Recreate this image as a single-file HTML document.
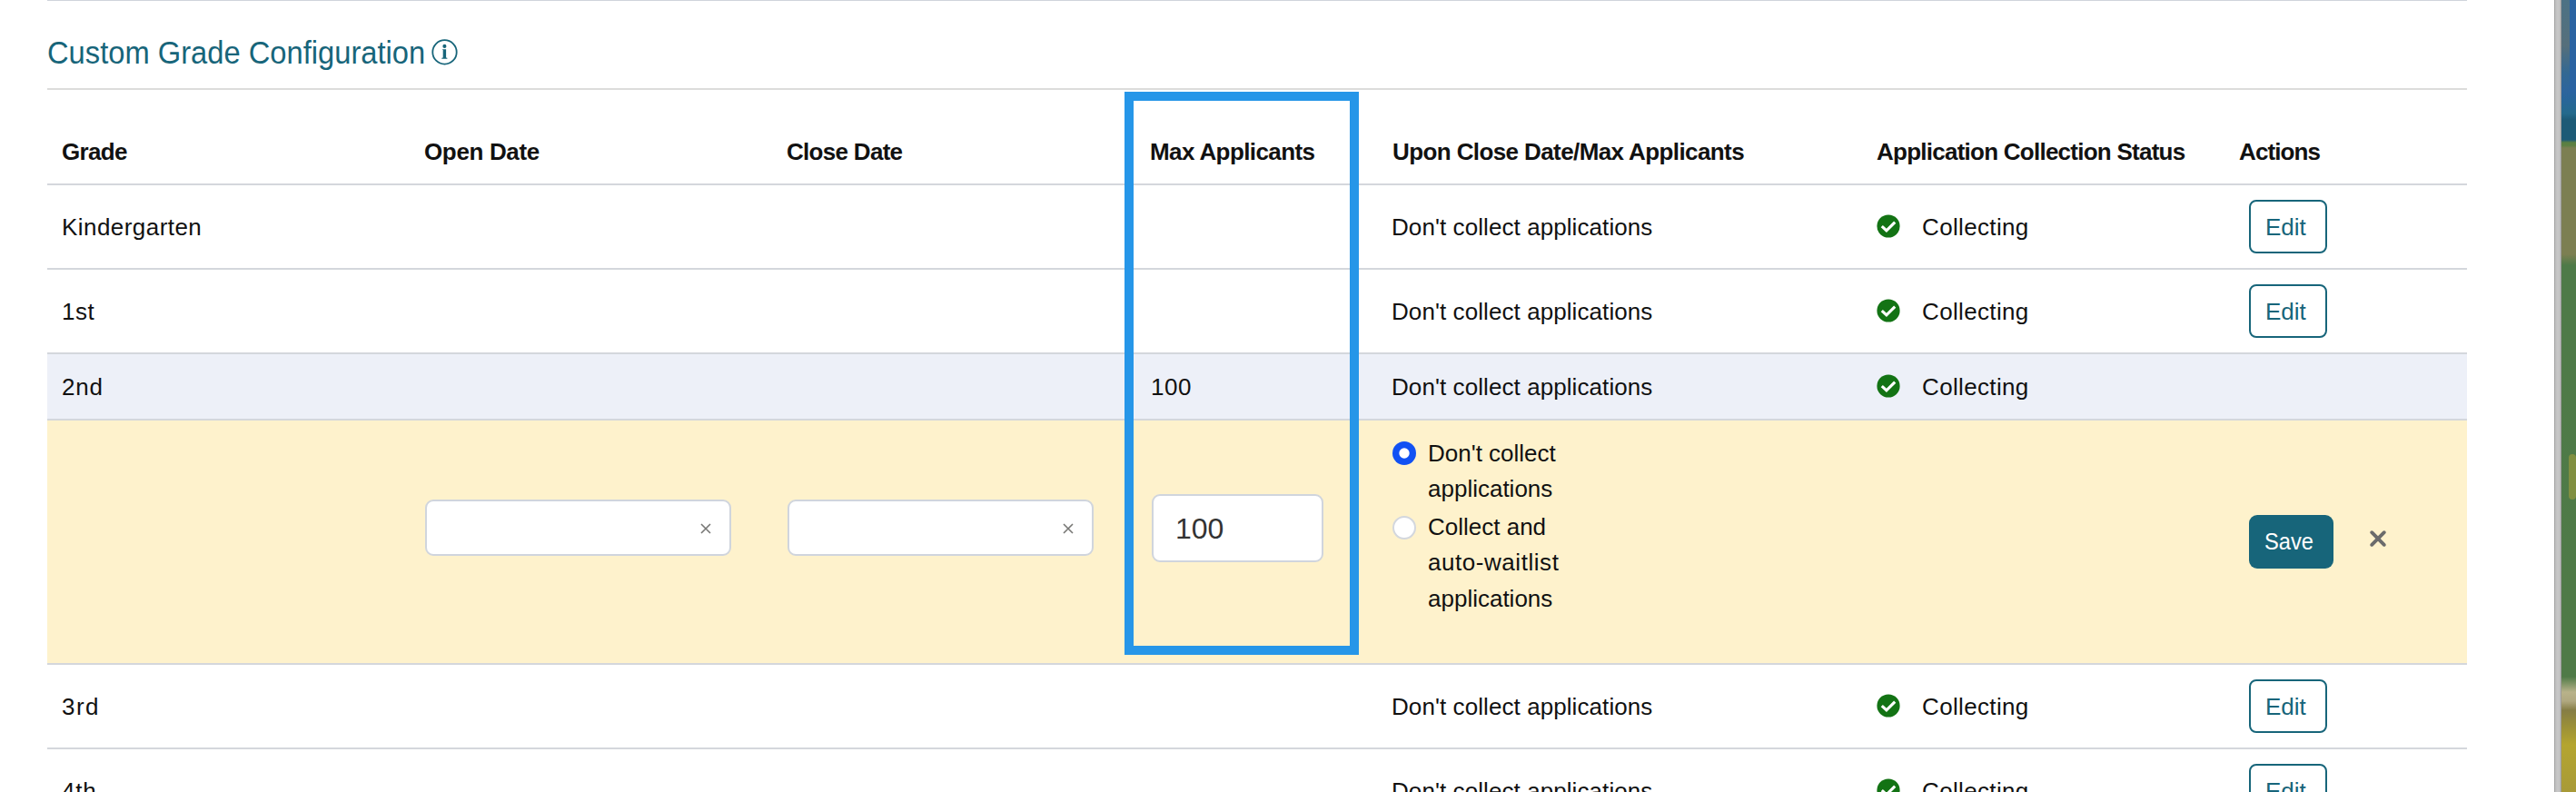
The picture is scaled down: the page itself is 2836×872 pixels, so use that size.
<!DOCTYPE html>
<html><head><meta charset="utf-8">
<style>
html,body{margin:0;padding:0;background:#fff;width:2836px;height:872px;overflow:hidden;position:relative;font-family:"Liberation Sans",sans-serif;color:#111;}
.a{position:absolute;white-space:nowrap;line-height:26px;font-size:26px;}
.h{position:absolute;white-space:nowrap;line-height:26px;font-weight:700;font-size:26px;letter-spacing:-0.7px;}
.ln{position:absolute;left:52px;width:2664px;height:2px;background:#d4d7dc;}
.bg{position:absolute;left:52px;width:2664px;}
.chk{position:absolute;}
.edit{position:absolute;left:2476px;width:86px;height:59px;border:2px solid #17657a;border-radius:8px;box-sizing:border-box;background:#fff;}
.edit span{position:absolute;left:16px;top:15px;font-size:26px;line-height:26px;color:#17657a;}
.inp{position:absolute;background:#fff;border:2px solid #d0d5dd;border-radius:9px;box-sizing:border-box;}
</style></head><body>
<div class="ln" style="top:0;height:1px;background:#cfd4db"></div>
<div class="a" style="left:52px;top:41px;font-size:35.5px;line-height:35px;color:#17657a;transform:scaleX(0.921);transform-origin:0 0">Custom Grade Configuration</div>
<svg style="position:absolute;left:474px;top:42px" width="31" height="31" viewBox="0 0 31 31"><circle cx="15.5" cy="15.4" r="13.2" fill="none" stroke="#17657a" stroke-width="1.8"/><circle cx="15.4" cy="8.9" r="2.05" fill="#17657a"/><path d="M12.4 12.6l1.6-0.4h3.1v9.2l1.3 0.3v1.1h-6.1v-1.1l1.4-0.3v-8.4l-1.3-0.4z" fill="#17657a"/></svg>
<div class="ln" style="top:97px;background:#dcdcdb"></div>
<div class="bg" style="top:390px;height:71px;background:#edf0f8"></div>
<div class="bg" style="top:463px;height:267px;background:#fef2cc"></div>
<div class="ln" style="top:202px"></div>
<div class="ln" style="top:295px"></div>
<div class="ln" style="top:388px"></div>
<div class="ln" style="top:461px"></div>
<div class="ln" style="top:730px"></div>
<div class="ln" style="top:823px"></div>
<div class="h" style="left:68px;top:154px;letter-spacing:-0.7px">Grade</div>
<div class="h" style="left:467px;top:154px;letter-spacing:-0.35px">Open Date</div>
<div class="h" style="left:866px;top:154px;letter-spacing:-0.7px">Close Date</div>
<div class="h" style="left:1266px;top:154px;letter-spacing:-0.6px">Max Applicants</div>
<div class="h" style="left:1533px;top:154px;letter-spacing:-0.6px">Upon Close Date/Max Applicants</div>
<div class="h" style="left:2066px;top:154px;letter-spacing:-0.75px">Application Collection Status</div>
<div class="h" style="left:2465px;top:154px;letter-spacing:-0.9px">Actions</div>
<div class="a" style="left:68px;top:237px;letter-spacing:0.45px">Kindergarten</div>
<div class="a" style="left:1532px;top:237px;letter-spacing:0.08px">Don't collect applications</div>
<svg class="chk" style="left:2066px;top:236px" width="26" height="26" viewBox="0 0 26 26"><circle cx="13" cy="13" r="12.6" fill="#137314"/><path d="M6.9 14.1L10.9 17.9L19.1 9.7" fill="none" stroke="#fff" stroke-width="3.1" stroke-linecap="square"/></svg>
<div class="a" style="left:2116px;top:237px;letter-spacing:0.35px">Collecting</div>
<div class="edit" style="top:220px"><span>Edit</span></div>
<div class="a" style="left:68px;top:330px;letter-spacing:0.5px">1st</div>
<div class="a" style="left:1532px;top:330px;letter-spacing:0.08px">Don't collect applications</div>
<svg class="chk" style="left:2066px;top:329px" width="26" height="26" viewBox="0 0 26 26"><circle cx="13" cy="13" r="12.6" fill="#137314"/><path d="M6.9 14.1L10.9 17.9L19.1 9.7" fill="none" stroke="#fff" stroke-width="3.1" stroke-linecap="square"/></svg>
<div class="a" style="left:2116px;top:330px;letter-spacing:0.35px">Collecting</div>
<div class="edit" style="top:313px"><span>Edit</span></div>
<div class="a" style="left:68px;top:413px;letter-spacing:0.8px">2nd</div>
<div class="a" style="left:1267px;top:413px;letter-spacing:0.6px">100</div>
<div class="a" style="left:1532px;top:413px;letter-spacing:0.08px">Don't collect applications</div>
<svg class="chk" style="left:2066px;top:412px" width="26" height="26" viewBox="0 0 26 26"><circle cx="13" cy="13" r="12.6" fill="#137314"/><path d="M6.9 14.1L10.9 17.9L19.1 9.7" fill="none" stroke="#fff" stroke-width="3.1" stroke-linecap="square"/></svg>
<div class="a" style="left:2116px;top:413px;letter-spacing:0.35px">Collecting</div>
<div class="a" style="left:68px;top:765px;letter-spacing:1.5px">3rd</div>
<div class="a" style="left:1532px;top:765px;letter-spacing:0.08px">Don't collect applications</div>
<svg class="chk" style="left:2066px;top:764px" width="26" height="26" viewBox="0 0 26 26"><circle cx="13" cy="13" r="12.6" fill="#137314"/><path d="M6.9 14.1L10.9 17.9L19.1 9.7" fill="none" stroke="#fff" stroke-width="3.1" stroke-linecap="square"/></svg>
<div class="a" style="left:2116px;top:765px;letter-spacing:0.35px">Collecting</div>
<div class="edit" style="top:748px"><span>Edit</span></div>
<div class="a" style="left:68px;top:858px;letter-spacing:0.8px">4th</div>
<div class="a" style="left:1532px;top:858px;letter-spacing:0.08px">Don't collect applications</div>
<svg class="chk" style="left:2066px;top:857px" width="26" height="26" viewBox="0 0 26 26"><circle cx="13" cy="13" r="12.6" fill="#137314"/><path d="M6.9 14.1L10.9 17.9L19.1 9.7" fill="none" stroke="#fff" stroke-width="3.1" stroke-linecap="square"/></svg>
<div class="a" style="left:2116px;top:858px;letter-spacing:0.35px">Collecting</div>
<div class="edit" style="top:841px"><span>Edit</span></div>
<div class="inp" style="left:468px;top:550px;width:337px;height:62px"></div>
<div class="inp" style="left:867px;top:550px;width:337px;height:62px"></div>
<svg style="position:absolute;left:771px;top:576px" width="12" height="12" viewBox="0 0 12 12"><path d="M1 1L11 11M11 1L1 11" stroke="#777775" stroke-width="1.6"/></svg>
<svg style="position:absolute;left:1170px;top:576px" width="12" height="12" viewBox="0 0 12 12"><path d="M1 1L11 11M11 1L1 11" stroke="#777775" stroke-width="1.6"/></svg>
<div class="inp" style="left:1268px;top:544px;width:189px;height:75px"></div>
<div class="a" style="left:1294px;top:566px;font-size:32px;line-height:32px;color:#333">100</div>
<svg style="position:absolute;left:1533px;top:486px" width="26" height="26" viewBox="0 0 26 26"><circle cx="13" cy="13" r="13" fill="#1151f3"/><circle cx="13" cy="13" r="5.7" fill="#fff"/></svg>
<svg style="position:absolute;left:1533px;top:568px" width="26" height="26" viewBox="0 0 26 26"><circle cx="13" cy="13" r="12" fill="#fff" stroke="#d3d7de" stroke-width="2"/></svg>
<div class="a" style="left:1572px;top:486px;">Don't collect</div>
<div class="a" style="left:1572px;top:525px;">applications</div>
<div class="a" style="left:1572px;top:567px;">Collect and</div>
<div class="a" style="left:1572px;top:606px;letter-spacing:0.55px">auto-waitlist</div>
<div class="a" style="left:1572px;top:646px;">applications</div>
<div style="position:absolute;left:2476px;top:567px;width:93px;height:59px;background:#17657a;border-radius:9px"></div>
<div class="a" style="left:2493px;top:583px;color:#fff;font-size:26px;line-height:26px;transform:scaleX(0.91);transform-origin:0 0">Save</div>
<svg style="position:absolute;left:2607px;top:582px" width="22" height="22" viewBox="0 0 22 22"><path d="M4.2 4.2L17.8 17.8M17.8 4.2L4.2 17.8" stroke="#6b6b6b" stroke-width="3.9" stroke-linecap="round"/></svg>
<div style="position:absolute;left:1238px;top:101px;width:258px;height:620px;box-sizing:border-box;border:10px solid #2696e8"></div>
<div style="position:absolute;left:2812px;top:0;width:8px;height:872px;background:linear-gradient(90deg,#8a8a8a 0,#bdbdbd 1px,#c9c9c9 50%,#bdbdbd 7px,#7a7a7a 8px)"></div>
<div style="position:absolute;left:2820px;top:0;width:16px;height:872px;background:linear-gradient(180deg,#2b63a2 0,#2a63a2 100px,#246a8c 125px,#1d5a76 132px,#1d5a76 154px,#5b8042 157px,#5b8042 160px,#7c7f52 163px,#7c7f52 280px,#4e7a48 292px,#4f7a47 745px,#b8b28a 762px,#b0a880 772px,#857d45 782px,#9b9038 800px,#b4a530 820px,#a89a38 872px)"></div>
<div style="position:absolute;left:2820px;top:0;width:9px;height:110px;background:linear-gradient(180deg,rgba(90,120,120,0.7) 0,rgba(100,115,110,0.75) 50px,rgba(60,110,130,0.5) 80px,rgba(42,99,162,0) 110px)"></div>
<div style="position:absolute;left:2828px;top:500px;width:8px;height:50px;border-radius:4px;background:rgba(170,160,60,0.55)"></div>
</body></html>
